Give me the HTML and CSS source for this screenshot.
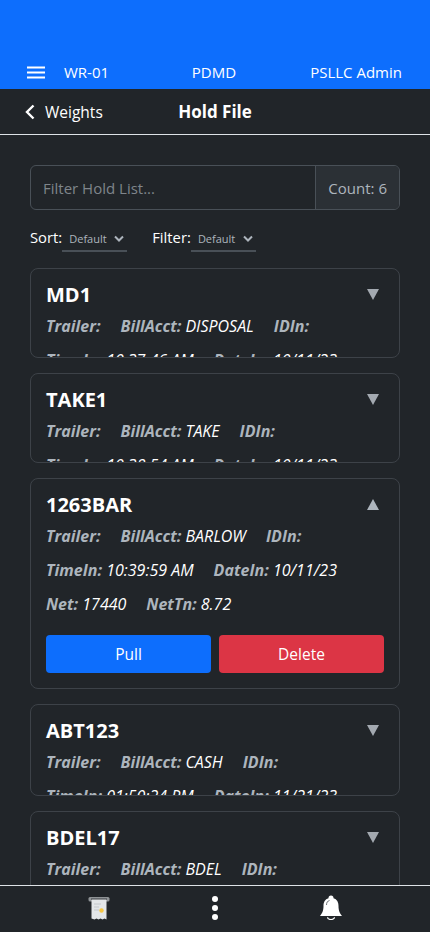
FILE: index.html
```html
<!DOCTYPE html>
<html lang="en">
<head>
    <meta charset="UTF-8">
    <meta name="viewport" content="width=device-width, initial-scale=1.0">
    <title>Hold File</title>
    <link rel="stylesheet" href="styles.css">
</head>
<body>

<div class="app">
    <header class="topbar">
        <div class="topbar-menu">
            <svg width="20" height="13" viewBox="0 0 20 13"><path d="M1 1.500h18M1 6.500h18M1 11.500h18" stroke="#fff" stroke-width="2" fill="none"/></svg>
            <span>WR-01</span>
        </div>
        <span class="topbar-mid">PDMD</span>
        <span class="topbar-user">PSLLC Admin</span>
    </header>

    <nav class="subnav">
        <div class="back">
            <svg width="12" height="16" viewBox="0 0 12 16"><path d="M9.500 1.500L3 8l6.500 6.500" stroke="#fff" stroke-width="2.400" fill="none"/></svg>
            <span>Weights</span>
        </div>
        <h1>Hold File</h1>
    </nav>

    <main class="content">
        <div class="input-group">
            <input type="text" placeholder="Filter Hold List...">
            <span class="count">Count: 6</span>
        </div>

        <div class="sort-row">
            <div class="sort-item">
                <span>Sort:</span>
                <div class="fake-select">Default
                    <svg width="10" height="7" viewBox="0 0 10 7"><path d="M1 1.500l4 4 4-4" stroke="#adb5bd" stroke-width="2" fill="none"/></svg>
                </div>
            </div>
            <div class="sort-item">
                <span>Filter:</span>
                <div class="fake-select">Default
                    <svg width="10" height="7" viewBox="0 0 10 7"><path d="M1 1.500l4 4 4-4" stroke="#adb5bd" stroke-width="2" fill="none"/></svg>
                </div>
            </div>
        </div>

        <div class="card">
            <div class="card-head"><h2>MD1</h2><span class="tri"></span></div>
            <p><span><b>Trailer:</b></span><span><b>BillAcct:</b> DISPOSAL</span><span><b>IDIn:</b></span></p>
            <p><span><b>TimeIn:</b> 10:37:46 AM</span><span><b>DateIn:</b> 10/11/23</span></p>
        </div>

        <div class="card">
            <div class="card-head"><h2>TAKE1</h2><span class="tri"></span></div>
            <p><span><b>Trailer:</b></span><span><b>BillAcct:</b> TAKE</span><span><b>IDIn:</b></span></p>
            <p><span><b>TimeIn:</b> 10:38:54 AM</span><span><b>DateIn:</b> 10/11/23</span></p>
        </div>

        <div class="card open">
            <div class="card-head"><h2>1263BAR</h2><span class="tri up"></span></div>
            <p><span><b>Trailer:</b></span><span><b>BillAcct:</b> BARLOW</span><span><b>IDIn:</b></span></p>
            <p><span><b>TimeIn:</b> 10:39:59 AM</span><span><b>DateIn:</b> 10/11/23</span></p>
            <p><span><b>Net:</b> 17440</span><span><b>NetTn:</b> 8.72</span></p>
            <div class="card-btns">
                <button class="btn-pull">Pull</button>
                <button class="btn-delete">Delete</button>
            </div>
        </div>

        <div class="card tall">
            <div class="card-head"><h2>ABT123</h2><span class="tri"></span></div>
            <p><span><b>Trailer:</b></span><span><b>BillAcct:</b> CASH</span><span><b>IDIn:</b></span></p>
            <p><span><b>TimeIn:</b> 01:50:24 PM</span><span><b>DateIn:</b> 11/21/23</span></p>
        </div>

        <div class="card">
            <div class="card-head"><h2>BDEL17</h2><span class="tri"></span></div>
            <p><span><b>Trailer:</b></span><span><b>BillAcct:</b> BDEL</span><span><b>IDIn:</b></span></p>
        </div>
    </main>

    <footer class="bottombar">
        <svg width="22" height="24" viewBox="0 0 22 24">
            <rect x="0.500" y="1" width="21" height="4.500" rx="1.500" fill="#8f9396"/>
            <rect x="3" y="2.500" width="16" height="1.500" fill="#3a3e42"/>
            <path d="M3.500 3.500h15v20l-2-1-2 1-2-1-2 1-2-1-2 1-3-1z" fill="#e3e6e8"/>
            <path d="M6 8h7M6 11h5M6 14h5" stroke="#c4c8cc" stroke-width="1"/>
            <circle cx="13.500" cy="14.500" r="2.200" fill="#f5c542"/>
        </svg>
        <svg width="8" height="26" viewBox="0 0 8 26">
            <circle cx="4" cy="4" r="3" fill="#fff"/><circle cx="4" cy="13" r="3" fill="#fff"/><circle cx="4" cy="22" r="3" fill="#fff"/>
        </svg>
        <svg width="22" height="25" viewBox="0 0 22 25">
            <path d="M11 0.500a2.500 2.500 0 0 1 2.500 2.500v.300c3.500 1 5 4 5 7.700 0 5 1.500 7.500 3.500 10H0c2-2.500 3.500-5 3.500-10 0-3.700 1.500-6.700 5-7.700V3A2.500 2.500 0 0 1 11 .5z" fill="#fff"/>
            <path d="M6.500 10c0-2.500 1-4 3-4.500" fill="none" stroke="#6d7276" stroke-width="1"/>
            <path d="M7.500 22.300a3.500 2.200 0 0 0 7 0" fill="none" stroke="#fff" stroke-width="1.200"/>
        </svg>
    </footer>
</div>

</body>
</html>
```

FILE: styles.css
```css
* {
    box-sizing: border-box;
}
body {
    margin: 0;
    font-family: "Open Sans", "Noto Sans", sans-serif;
    background-color: #212529;
    color: white;
}
.app {
    height: 932px;
    display: flex;
    flex-direction: column;
    overflow: hidden;
}
.topbar {
    height: 89px;
    flex: none;
    background-color: #0d6efd;
    display: grid;
    grid-template-columns: 1fr auto 1fr;
    align-items: center;
    padding: 55px 28px 0 26px;
    font-size: 15px;
}
.topbar-menu {
    display: flex;
    align-items: center;
    gap: 18px;
}
.topbar-user {
    text-align: right;
}
.subnav {
    height: 46px;
    flex: none;
    display: grid;
    grid-template-columns: 1fr auto 1fr;
    align-items: center;
    padding: 0 24px;
    border-bottom: 1px solid #dee2e6;
}
.subnav h1 {
    margin: 0;
    font-size: 17px;
    font-weight: 700;
}
.back {
    display: flex;
    align-items: center;
    gap: 9px;
    font-size: 15.500px;
}
.content {
    flex: 1;
    min-height: 0;
    overflow: hidden;
    padding: 30px 30px 0;
}
.input-group {
    display: flex;
    height: 45px;
    border: 1px solid #495057;
    border-radius: 6px;
    overflow: hidden;
    font-size: 15px;
}
.input-group input {
    flex: 1;
    min-width: 0;
    border: none;
    outline: none;
    background: transparent;
    padding: 0 12px;
    font: inherit;
    color: white;
}
.input-group input::placeholder {
    color: #7f858b;
}
.count {
    display: flex;
    align-items: center;
    padding: 0 12px;
    background-color: #2b3035;
    border-left: 1px solid #495057;
    color: #adb5bd;
}
.sort-row {
    display: flex;
    gap: 25px;
    margin: 17px 0 14px;
    font-size: 14.800px;
    height: 27px;
}
.sort-item {
    display: flex;
    align-items: flex-start;
    gap: 0;
}
.fake-select {
    display: flex;
    align-items: center;
    justify-content: space-between;
    width: 65px;
    height: 25px;
    padding: 0 3px 0 7px;
    font-size: 11px;
    color: #adb5bd;
    border-bottom: 2px solid #495057;
}
.card {
    height: 90px;
    overflow: hidden;
    margin-bottom: 15px;
    padding: 13px 15px 0;
    border: 1px solid #3d4248;
    border-radius: 8px;
}
.card.open {
    height: 211px;
}
.card.tall {
    height: 92px;
}
.card-head {
    display: flex;
    justify-content: space-between;
    align-items: center;
    height: 24px;
    margin-bottom: 3px;
}
.card-head h2 {
    margin: 0;
    font-size: 20px;
    font-weight: 700;
}
.tri {
    width: 0;
    height: 0;
    margin-right: 5px;
    border-left: 6.500px solid transparent;
    border-right: 6.500px solid transparent;
    border-top: 11px solid #a3a9b0;
}
.tri.up {
    border-top: none;
    border-bottom: 11px solid #adb5bd;
}
.card p {
    display: flex;
    gap: 20px;
    height: 34px;
    line-height: 34px;
    margin: 0;
    font-size: 16px;
    font-style: italic;
    white-space: nowrap;
}
.card b {
    color: #adb5bd;
    font-weight: 700;
}
.card-btns {
    display: flex;
    gap: 8px;
    margin-top: 14px;
}
.card-btns button {
    flex: 1;
    height: 38px;
    border: none;
    border-radius: 4px;
    color: white;
    font: inherit;
    font-size: 15.500px;
}
.btn-pull {
    background-color: #0d6efd;
}
.btn-delete {
    background-color: #dc3545;
}
.bottombar {
    height: 47px;
    flex: none;
    display: grid;
    grid-template-columns: 116px 116px 116px;
    justify-content: center;
    align-items: center;
    justify-items: center;
    border-top: 1px solid #dee2e6;
    padding: 0 0 3px;
    background-color: #212529;
}
```
